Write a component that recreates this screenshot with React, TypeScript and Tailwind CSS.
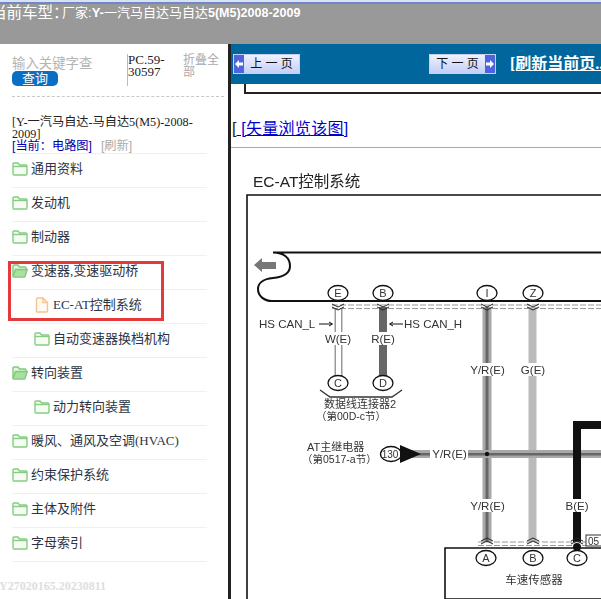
import React from 'react'

const sans = 'font-["Liberation_Sans","Noto_Sans_CJK_SC",sans-serif]'
const serif = 'font-["Liberation_Serif","Noto_Sans_CJK_SC",serif]'

const rows = [
  { label: '通用资料', type: 'folder', indent: false },
  { label: '发动机', type: 'folder', indent: false },
  { label: '制动器', type: 'folder', indent: false },
  { label: '变速器,变速驱动桥', type: 'open', indent: false },
  { label: 'EC-AT控制系统', type: 'file', indent: true },
  { label: '自动变速器换档机构', type: 'folder', indent: true },
  { label: '转向装置', type: 'open', indent: false },
  { label: '动力转向装置', type: 'folder', indent: true },
  { label: '暖风、通风及空调(HVAC)', type: 'folder', indent: false },
  { label: '约束保护系统', type: 'folder', indent: false },
  { label: '主体及附件', type: 'folder', indent: false },
  { label: '字母索引', type: 'folder', indent: false },
]

function RowIcon({ type }: { type: string }) {
  if (type === 'file') {
    return (
      <svg width="16" height="16" viewBox="0 0 16 16" fill="#fffaf2" stroke="#f3c48c" strokeWidth="1.4" className="shrink-0">
        <path d="M2.5 2 a1 1 0 0 1 1-1 H9 L13.5 5.5 V14 a1 1 0 0 1-1 1 H3.5 a1 1 0 0 1-1-1 Z" />
        <path d="M9 1 V5.5 H13.5" fill="none" />
      </svg>
    )
  }
  if (type === 'open') {
    return (
      <svg width="16" height="14" viewBox="0 0 16 14" fill="#e3f5de" stroke="#7fc97a" strokeWidth="1.4" className="shrink-0">
        <path d="M1 12 V2 a1 1 0 0 1 1-1 H6 L7.5 3 H13 a1 1 0 0 1 1 1 V5" />
        <path d="M1 12.5 L3.5 5.5 H15.2 L13 12.5 a0.6 0.6 0 0 1-.6.6 H1.6 Z" fill="#a9dfa1" />
      </svg>
    )
  }
  return (
    <svg width="16" height="14" viewBox="0 0 16 14" fill="#f6fcf4" stroke="#86cc82" strokeWidth="1.4" className="shrink-0">
      <path d="M1 12 V2 a1 1 0 0 1 1-1 H6 L7.5 3 H14 a1 1 0 0 1 1 1 V12 a1 1 0 0 1-1 1 H2 a1 1 0 0 1-1-1 Z" />
      <path d="M1 4.5 H15" fill="none" />
    </svg>
  )
}

function Sidebar() {
  return (
    <aside className="relative w-[228px] shrink-0 bg-white">
      <div className="mx-3 flex h-[53px] w-[212px] border-b border-dashed border-[#c8c8c8] pt-[10px]">
        <div className="w-[115px] shrink-0 pt-[2px]">
          <div className={`${sans} text-[13.4px] leading-[15px] whitespace-nowrap text-[#b4b4b4]`}>输入关键字查</div>
          <div className={`${sans} flex h-[15px] w-[46px] items-center justify-center rounded-[5px] bg-[#0a6fc4] text-[13px] text-white`}>查询</div>
        </div>
        <div className={`${serif} h-[32px] w-[56px] shrink-0 border-l border-[#bbb] text-[13px] leading-[12px] text-[#222]`}>PC.59-30597</div>
        <div className={`${sans} w-[38px] text-[12px] leading-[12px] text-[#aaa]`}>折叠全部</div>
      </div>

      <div className="mx-3 mt-[19px] w-[195px] border-b border-[#f0f0f0]">
        <div className={`${serif} h-[24px] text-[12.2px] leading-[12px] whitespace-nowrap text-[#222]`}>
          [Y-一汽马自达-马自达5(M5)-2008-
          <br />
          2009]
        </div>
        <div className={`${sans} flex h-[13px] items-center text-[12.2px] whitespace-nowrap`}>
          <span className="text-[#0000b0]">[当前：电路图]</span>
          <span className="ml-[9px] text-[#aaa]">[刷新]</span>
        </div>
      </div>

      <ul className="mx-3 w-[195px]">
        {rows.map((r) => (
          <li key={r.label} className={`flex h-[34px] items-center border-b border-[#f0f0f0] pb-[3px] ${r.indent ? 'pl-[22px]' : ''}`}>
            <RowIcon type={r.type} />
            <span className={`${serif} ml-[3px] text-[13px] whitespace-nowrap text-[#2c3444]`}>{r.label}</span>
          </li>
        ))}
      </ul>

      {/* red annotation box */}
      <div className="absolute top-[217px] left-[8px] h-[60px] w-[156px] border-[3px] border-[#e63a3a]" />

      <div className={`${serif} absolute bottom-[4px] left-[-1px] text-[12px] font-bold text-[#dedede]`}>Y27020165.20230811</div>
    </aside>
  )
}

function PageButton({ label, dir }: { label: string; dir: 'prev' | 'next' }) {
  const arrow = (
    <span className="flex h-full w-[10px] items-center justify-center bg-[#4d63e0]">
      <svg width="8" height="8" viewBox="0 0 8 8" fill="white">
        {dir === 'prev' ? <path d="M0 4 L4 0 V2.5 H8 V5.5 H4 V8 Z" /> : <path d="M8 4 L4 0 V2.5 H0 V5.5 H4 V8 Z" />}
      </svg>
    </span>
  )
  return (
    <div className={`${sans} flex h-[20px] w-[67px] items-center justify-between border border-[#c8d0f0] bg-gradient-to-b from-[#eef1ff] to-[#c4cff6] text-[12px] text-[#111]`}>
      {dir === 'prev' && arrow}
      <span className="flex-1 text-center whitespace-nowrap">{label}</span>
      {dir === 'next' && arrow}
    </div>
  )
}

function Circle({ x, y, t, fs = 11 }: { x: number; y: number; t: string; fs?: number }) {
  return (
    <g>
      <ellipse cx={x} cy={y} rx="10" ry="7.5" fill="white" stroke="#111" strokeWidth="1.3" />
      <text x={x} y={y + 4} fontSize={fs} textAnchor="middle" fill="#333">{t}</text>
    </g>
  )
}

function Chevrons({ x, y, up }: { x: number; y: number; up?: boolean }) {
  const d = up ? -1 : 1
  return (
    <g fill="none" stroke="#222" strokeWidth="1">
      <path d={`M${x - 6} ${y} L${x} ${y + 3 * d} L${x + 6} ${y}`} />
      <path d={`M${x - 6} ${y + 3 * d} L${x} ${y + 6 * d} L${x + 6} ${y + 3 * d}`} />
    </g>
  )
}

function Label({ x, y, t, anchor = 'middle', fs = 11.5 }: { x: number; y: number; t: string; anchor?: 'middle' | 'start'; fs?: number }) {
  return <text x={x} y={y} fontSize={fs} textAnchor={anchor} fill="#333">{t}</text>
}

function YrWire({ x, y1, y2 }: { x: number; y1: number; y2: number }) {
  return (
    <g>
      <rect x={x - 4.5} y={y1} width="9" height={y2 - y1} fill="#a8a8a8" />
      <rect x={x - 1.5} y={y1} width="3" height={y2 - y1} fill="#666" />
    </g>
  )
}

// wiring diagram, viewBox uses page px so it can be read off the screenshot
function Diagram() {
  return (
    <svg viewBox="231 165 370 434" className="block h-[434px] w-[370px] blur-[0.35px]" fontFamily="'Liberation Sans','Noto Sans CJK SC',sans-serif">
      <text x="253" y="186" fontSize="15.5" fill="#222">EC-AT控制系统</text>
      <path d="M247 599 V194 H601" fill="none" stroke="#111" strokeWidth="1.6" />

      <path d="M273 251.5 H601 M273 251.5 C284 251.5 290 257 290 265 C290 273 283 276 273 277 C262 278 258 283 258 288 C258 295 264 300 272 300 H601" fill="none" stroke="#111" strokeWidth="2" />
      <path d="M254 264 L262 257 V261 H276 V268 H262 V271 Z" fill="#777" />

      <path d="M332 304 H601 M332 307.5 H601" fill="none" stroke="#999" strokeWidth="1" strokeDasharray="6 2" />

      {/* wires */}
      <rect x="334.5" y="308" width="8" height="67" fill="#999" />
      <rect x="336" y="308" width="5" height="67" fill="white" />
      <rect x="379" y="306" width="8" height="69" fill="#666" />
      <YrWire x={487} y1={306} y2={541} />
      <rect x="528.5" y="306" width="8" height="235" fill="#bbb" />

      <rect x="400" y="449" width="201" height="8" fill="#a8a8a8" />
      <rect x="400" y="452" width="201" height="2.5" fill="#666" />
      <circle cx="487" cy="453" r="2.2" fill="#111" />

      <path d="M577 541 V424 H601" fill="none" stroke="#111" strokeWidth="8" />

      <Chevrons x={338} y={303} />
      <Chevrons x={383} y={303} />
      <Chevrons x={487} y={303} />
      <Chevrons x={533} y={303} />
      <Circle x={338} y={292} t="E" />
      <Circle x={383} y={292} t="B" />
      <Circle x={487} y={292} t="I" />
      <Circle x={533} y={292} t="Z" />

      <Label x={259} y={327} t="HS CAN_L" anchor="start" />
      <path d="M319 323 H332 M329 321 L332.5 323 L329 325" fill="none" stroke="#111" />
      <path d="M403 323 H390 M393 321 L389.5 323 L393 325" fill="none" stroke="#111" />
      <Label x={404} y={327} t="HS CAN_H" anchor="start" />

      <rect x="324" y="331" width="28" height="13" fill="white" />
      <rect x="371" y="331" width="24" height="13" fill="white" />
      <Label x={338} y={342} t="W(E)" />
      <Label x={383} y={342} t="R(E)" />

      <Circle x={338} y={382} t="C" />
      <Circle x={383} y={382} t="D" />
      <path d="M320 389 L330 396 H392 L402 389" fill="none" stroke="#333" strokeWidth="1.3" />
      <Label x={360} y={407} t="数据线连接器2" fs={11} />
      <Label x={316} y={419} t="（第00D-c节）" anchor="start" fs={10.5} />

      <Label x={307} y={450} t="AT主继电器" anchor="start" fs={11} />
      <Label x={302} y={462} t="（第0517-a节）" anchor="start" fs={10.5} />
      <ellipse cx="391" cy="453" rx="10.5" ry="7.5" fill="white" stroke="#111" strokeWidth="1.3" />
      <text x="390" y="456.5" fontSize="10" textAnchor="middle" fill="#333">130</text>
      <path d="M400 444 L421 453 L400 462 Z" fill="#111" />
      <rect x="430" y="447" width="38" height="12" fill="white" />
      <Label x={449.5} y={457} t="Y/R(E)" />

      <rect x="469" y="362" width="38" height="13" fill="white" />
      <Label x={487.5} y={373} t="Y/R(E)" />
      <rect x="519" y="362" width="28" height="13" fill="white" />
      <Label x={533} y={373} t="G(E)" />
      <rect x="469" y="498" width="38" height="13" fill="white" />
      <Label x={487.5} y={509} t="Y/R(E)" />
      <rect x="563" y="498" width="28" height="13" fill="white" />
      <Label x={577} y={509} t="B(E)" />

      <path d="M478 541 H601 M478 544.5 H601" fill="none" stroke="#999" strokeWidth="1" strokeDasharray="6 2" />
      <Chevrons x={487} y={543} up />
      <Chevrons x={533} y={543} up />
      <Chevrons x={577} y={543} up />

      <rect x="586" y="534" width="20" height="11" fill="white" stroke="#333" />
      <text x="588" y="543.5" fontSize="10" fill="#333">05</text>

      <path d="M601 547 H445 V598 H601" fill="white" stroke="#111" strokeWidth="1.6" />
      <circle cx="577" cy="546" r="4" fill="#111" />
      <Circle x={486} y={557} t="A" />
      <Circle x={533} y={557} t="B" />
      <Circle x={577} y={557} t="C" />
      <Label x={534} y={583} t="车速传感器" fs={11.5} />
    </svg>
  )
}

function Main() {
  return (
    <main className="min-w-0 flex-1 overflow-hidden bg-white">
      <div className="flex h-[40px] items-center bg-[#00669c]">
        <div className="ml-[2px]"><PageButton label="上 一 页" dir="prev" /></div>
        <div className="ml-[129px]"><PageButton label="下 一 页" dir="next" /></div>
        <span className={`${serif} ml-[14px] text-[16px] font-bold whitespace-nowrap text-white underline`}>[刷新当前页..</span>
      </div>

      <div className="ml-[13px] h-[10px] border-b-2 border-l-2 border-[#222]" />

      <div className={`${sans} mt-[24px] ml-[1px] flex h-[22px] items-center text-[16px] whitespace-nowrap`}>
        <span className="text-[#222]">[</span>
        <span className="tracking-[0.3px] text-[#0000cc] underline">&nbsp;[矢量浏览该图]</span>
      </div>

      <div className="mt-[7px] h-[1px] bg-[#aaa]" />

      <div className="mt-[18px]"><Diagram /></div>
    </main>
  )
}

export default function App() {
  return (
    <div className="flex h-[599px] w-[601px] flex-col overflow-hidden bg-white">
      <div className="h-[44px] shrink-0 overflow-hidden bg-[#999999]">
        <div className="h-[2px] bg-[#d8e2f2]" />
        <div className="h-[2px] bg-[#7088c8]" />
        <div className={`${sans} -ml-[9px] flex items-center pt-[1px] text-[13px] leading-[16px] font-bold whitespace-nowrap text-white`}>
          <span className="text-[15.5px] font-normal">当前车型</span>
          <span className="w-[9px] shrink-0 overflow-hidden text-[15.5px] font-normal">：</span>
          <span className="font-normal">厂家:</span>
          <span>Y-</span>
          <span className="font-normal">一汽马自达马自达</span>
          <span className="text-[12.5px]">5(M5)2008-2009</span>
        </div>
      </div>
      <div className="flex min-h-0 flex-1">
        <Sidebar />
        <div className="w-[3px] shrink-0 bg-[#222]" />
        <Main />
      </div>
    </div>
  )
}
